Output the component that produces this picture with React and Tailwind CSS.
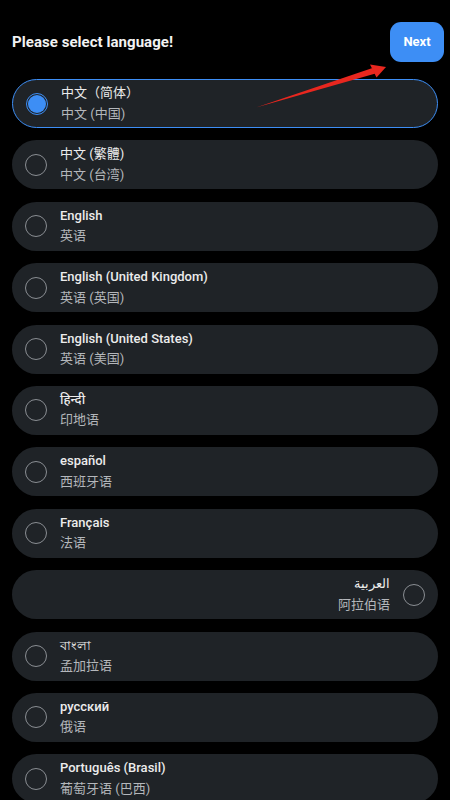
import { useState } from 'react';

const LANGS = [
  { name: '中文（简体）', sub: '中文 (中国)', plain: true },
  { name: '中文 (繁體)', sub: '中文 (台湾)', plain: true },
  { name: 'English', sub: '英语' },
  { name: 'English (United Kingdom)', sub: '英语 (英国)' },
  { name: 'English (United States)', sub: '英语 (美国)' },
  { name: 'हिन्दी', sub: '印地语' },
  { name: 'español', sub: '西班牙语' },
  { name: 'Français', sub: '法语' },
  { name: 'العربية', sub: '阿拉伯语', rtl: true, plain: true },
  { name: 'বাংলা', sub: '孟加拉语' },
  { name: 'русский', sub: '俄语' },
  { name: 'Português (Brasil)', sub: '葡萄牙语 (巴西)' },
];

const FONT = { fontFamily: 'Roboto, "Noto Sans", "Noto Sans CJK SC", sans-serif' };

function Radio({ on }) {
  return (
    <div
      className={`w-[22px] h-[22px] rounded-full flex items-center justify-center shrink-0 border ${
        on ? 'border-[#3d8ef5]' : 'border-[#8a8e93]'
      }`}
    >
      {on && <div className="w-[18px] h-[18px] rounded-full bg-[#3d8ef5]" />}
    </div>
  );
}

export default function App() {
  const [picked, setPicked] = useState(0);

  return (
    <div className="relative w-[450px] h-[800px] overflow-hidden bg-black" style={FONT}>
      {/* ── Header ───────────────────────── */}
      <div className="flex items-center justify-between pl-3 pr-[6px] pt-[22px] h-[62px]">
        <h1 className="text-[15px] font-bold text-[#f2f2f2] tracking-[0.05px] pt-[1px]">Please select language!</h1>
        <button className="w-[54px] h-[40px] rounded-[11px] bg-[#3d8ef5] text-white text-[13px] font-bold">
          Next
        </button>
      </div>

      {/* ── List ─────────────────────────── */}
      <div className="flex flex-col gap-[12.4px] px-3 pt-[17px]">
        {LANGS.map((l, i) => {
          const on = picked === i;
          return (
            <div
              key={i}
              onClick={() => setPicked(i)}
              className={`h-[49px] shrink-0 rounded-full bg-[#1f2327] flex items-center gap-[13px] cursor-pointer ${
                l.rtl ? 'flex-row-reverse pr-[13px]' : 'pl-[13px]'
              } ${on ? 'border border-[#3d8ef5]' : ''}`}
            >
              <Radio on={on} />
              <div className={`flex flex-col text-[13px] leading-[20.5px] ${l.rtl ? 'items-end' : ''}`}>
                <span className={`text-[#ececec] ${l.plain ? 'font-normal' : 'font-medium'}`}>{l.name}</span>
                <span className="text-[#b4b7bb]">{l.sub}</span>
              </div>
            </div>
          );
        })}
      </div>

      {/* ── Annotation arrow ─────────────── */}
      <svg className="absolute left-0 top-0 pointer-events-none" width="450" height="800">
        <polygon points="256,107.5 375.5,73.5 372.5,68" fill="#e8271f" />
        <polygon points="386,67 370,64.5 376.5,77.5" fill="#e8271f" />
      </svg>
    </div>
  );
}
